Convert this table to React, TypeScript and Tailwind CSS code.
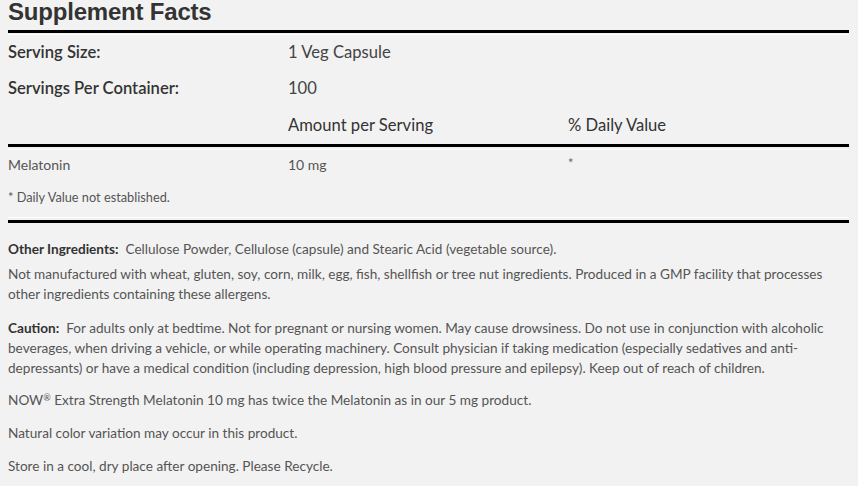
export default function App() {
  const font = { fontFamily: 'Lato, "Open Sans", sans-serif' }

  return (
    <div className="min-h-[486px] w-[858px] overflow-hidden bg-[#f2f2f2] text-[#444]" style={font}>
      <div className="w-[841px] pl-2 box-content">
        <h2
          className="h-6 text-[24px] leading-6 font-bold text-[#333] tracking-[-0.2px]"
          style={{ fontFamily: '"Liberation Sans", Arial, sans-serif' }}
        >
          Supplement Facts
        </h2>

        <div className="mt-[6px] h-[3px] bg-black" />
        <div className="mt-px h-px bg-white/80" />

        <div className="grid grid-cols-[280px_280px_1fr] text-[16.6px] text-[#444]">
          <div className="h-[35px] flex items-center font-semibold text-[#333]">Serving Size:</div>
          <div className="h-[35px] flex items-center">1 Veg Capsule</div>
          <div />
          <div className="h-9 flex items-center font-semibold text-[#333]">Servings Per Container:</div>
          <div className="h-9 flex items-center">100</div>
          <div />
          <div className="h-[38px]" />
          <div className="h-[38px] flex items-center pt-px text-[#333]">Amount per Serving</div>
          <div className="h-[38px] flex items-center pt-px text-[#333]">% Daily Value</div>
        </div>

        <div className="h-[3px] bg-black" />
        <div className="mt-[2px] h-px bg-white/80" />

        <div className="grid grid-cols-[280px_280px_1fr] text-[14px] text-[#555]">
          <div className="h-[28px] flex items-center">Melatonin</div>
          <div className="h-[28px] flex items-center">10 mg</div>
          <div className="h-[28px] flex items-center text-[13px] text-[#666]">*</div>
          <div className="col-span-3 h-[39px] flex items-center text-[12.75px]">* Daily Value not established.</div>
        </div>

        <div className="h-px bg-white/80" />
        <div className="mt-[2px] h-[3px] bg-black" />

        <div className="mt-[16px] text-[13.6px] leading-5 text-[#555]">
          <p>
            <span className="font-bold text-[#333]">Other Ingredients:</span>&nbsp; Cellulose Powder, Cellulose
            (capsule) and Stearic Acid (vegetable source).
          </p>
          <p className="mt-[5px]">
            Not manufactured with wheat, gluten, soy, corn, milk, egg, fish, shellfish or tree nut ingredients.
            Produced in a GMP facility that processes other ingredients containing these allergens.
          </p>
          <p className="mt-[14px]">
            <span className="font-bold text-[#333]">Caution:</span>&nbsp; For adults only at bedtime. Not for
            pregnant or nursing women. May cause drowsiness. Do not use in conjunction with alcoholic beverages, when
            driving a vehicle, or while operating machinery. Consult physician if taking medication (especially
            sedatives and anti-depressants) or have a medical condition (including depression, high blood pressure
            and epilepsy). Keep out of reach of children.
          </p>
          <p className="mt-3">
            NOW<sup className="text-[9px]">®</sup> Extra Strength Melatonin 10 mg has twice the Melatonin as in our 5
            mg product.
          </p>
          <p className="mt-[13px]">Natural color variation may occur in this product.</p>
          <p className="mt-[13px]">Store in a cool, dry place after opening. Please Recycle.</p>
        </div>
      </div>
    </div>
  )
}
